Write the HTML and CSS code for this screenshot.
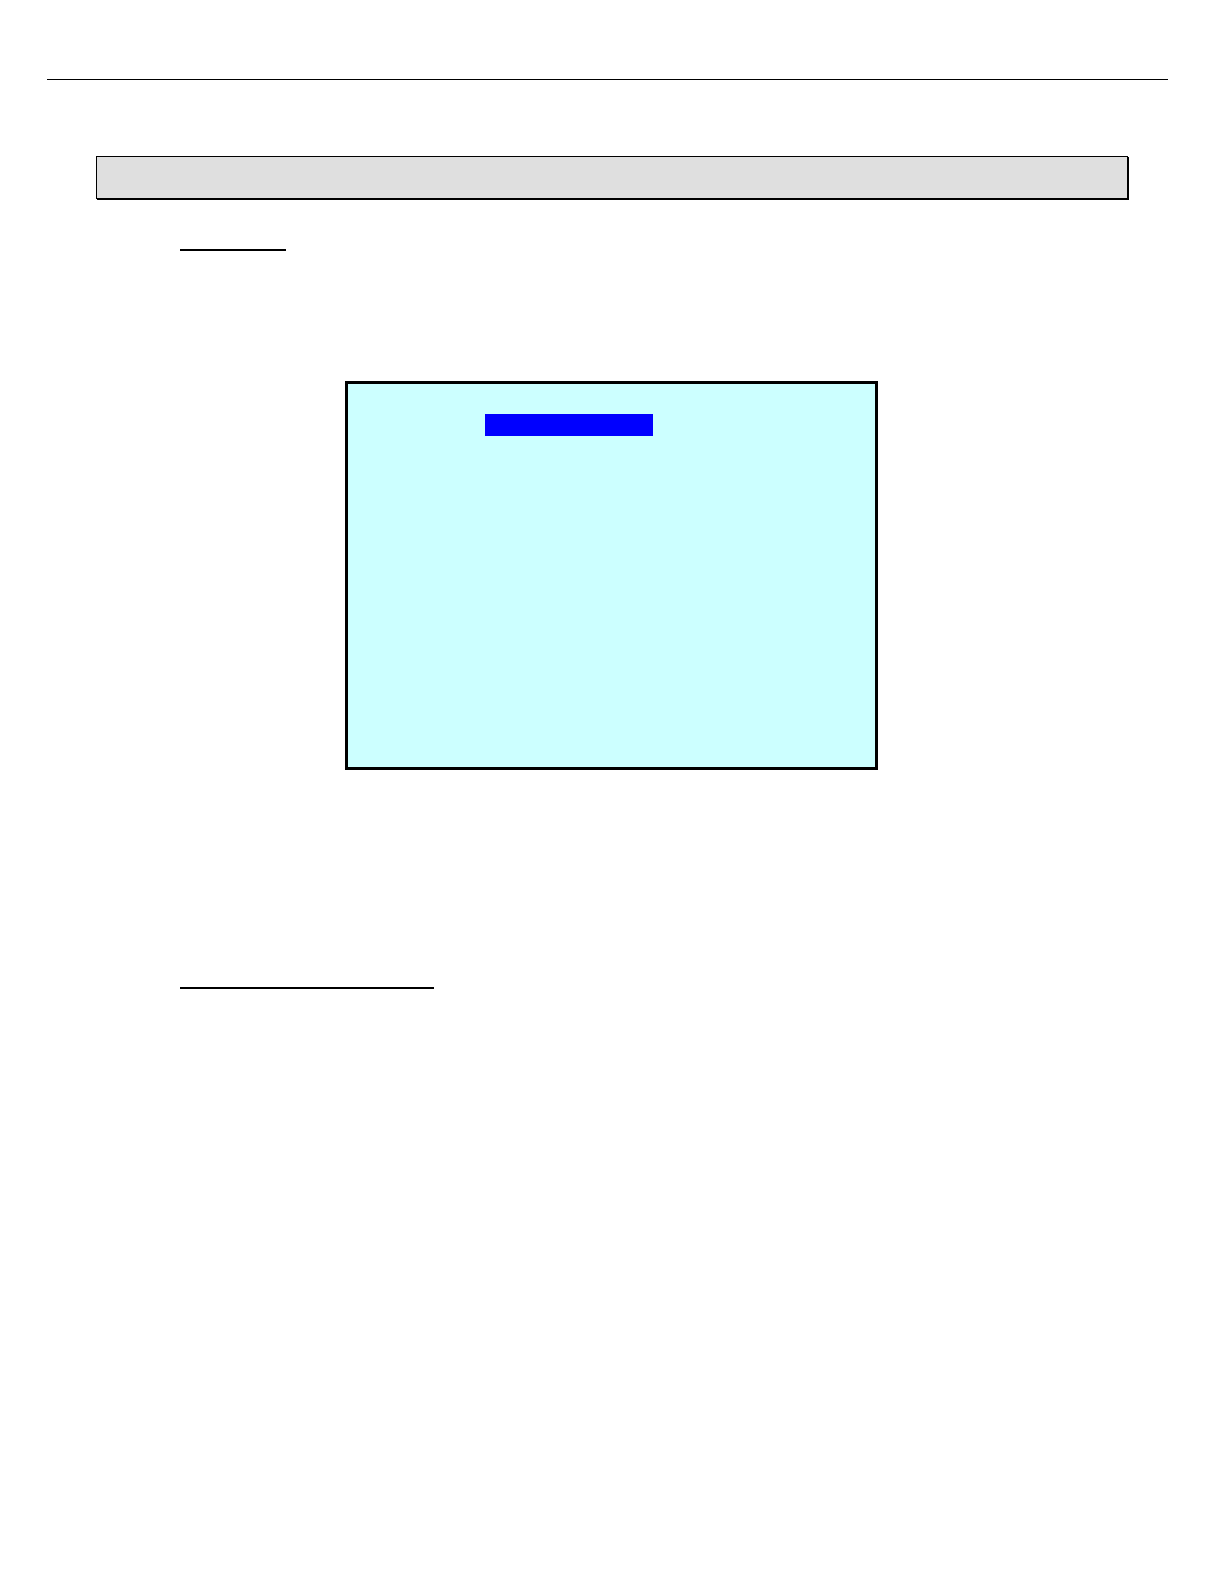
FILE: index.html
```html
<!DOCTYPE html>
<html lang="en">
<head>
<meta charset="utf-8">
<meta name="viewport" content="width=device-width, initial-scale=1">
<title>Document page</title>
<link rel="stylesheet" href="styles.css">
</head>
<body>
<div class="page">
  <header class="page-header"></header>
  <main class="content">
    <div class="title-bar"></div>
    <section class="section">
      <div class="rule rule-short"></div>
    </section>
    <div class="screen">
      <div class="screen-highlight"></div>
    </div>
    <section class="section section-last">
      <div class="rule rule-long"></div>
    </section>
  </main>
</div>
</body>
</html>
```

FILE: styles.css
```css
* {
  box-sizing: border-box;
}

body {
  margin: 0;
  background: #fff;
  font-family: "Liberation Sans", Arial, sans-serif;
}

.page {
  display: flex;
  flex-direction: column;
  min-height: 100vh;
  padding: 0 56px 0 47px;
}

.page-header {
  height: 80px;
  border-bottom: 1px solid #000;
}

.content {
  display: flex;
  flex-direction: column;
  padding: 76px 40px 0 49px;
}

.title-bar {
  height: 43px;
  border: 1px solid #000;
  background: #dfdfdf;
  box-shadow: 1px 1px 0 #000;
}

.section {
  padding: 50px 0 0 84px;
}

.rule {
  height: 2px;
  background: #000;
}

.rule-short {
  width: 106px;
}

.rule-long {
  width: 254px;
}

.screen {
  min-height: 389px;
  margin: 130px 250px 0 249px;
  padding: 30px 222px 0 137px;
  border: 3px solid #000;
  background: #cff;
}

.screen-highlight {
  height: 22px;
  background: #00f;
}

.section-last {
  padding-top: 217px;
}
```
